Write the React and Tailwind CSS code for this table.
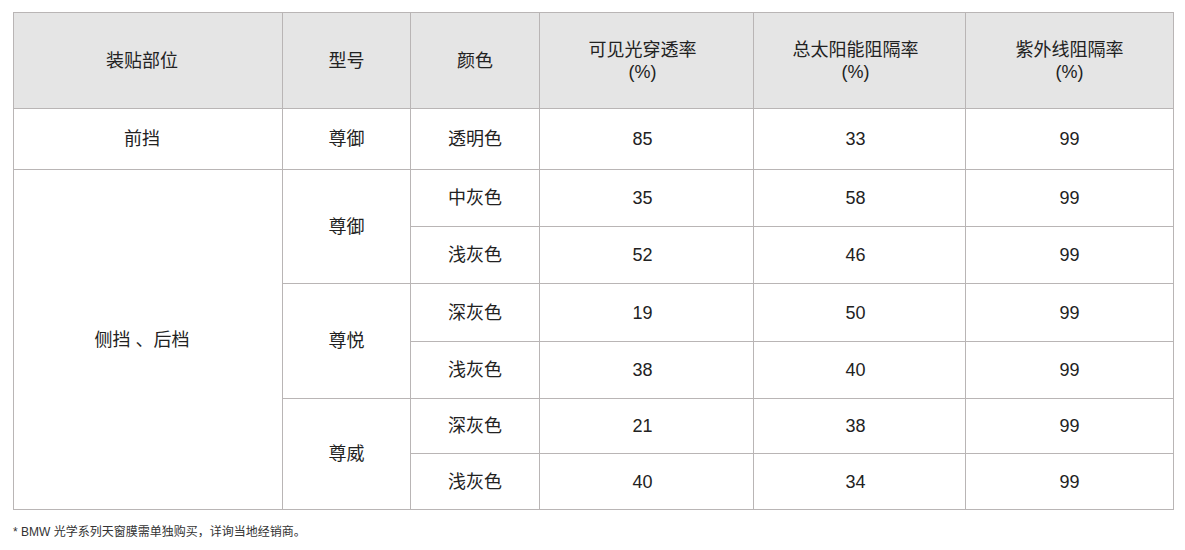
const rows = [
  { part: '前挡', partSpan: 1, model: '尊御', modelSpan: 1, color: '透明色', vis: 85, sun: 33, uv: 99, h: 'h-[61px]' },
  { part: '侧挡 、后档', partSpan: 6, model: '尊御', modelSpan: 2, color: '中灰色', vis: 35, sun: 58, uv: 99, h: 'h-[57px]' },
  { color: '浅灰色', vis: 52, sun: 46, uv: 99, h: 'h-[57px]' },
  { model: '尊悦', modelSpan: 2, color: '深灰色', vis: 19, sun: 50, uv: 99, h: 'h-[58px]' },
  { color: '浅灰色', vis: 38, sun: 40, uv: 99, h: 'h-[57px]' },
  { model: '尊威', modelSpan: 2, color: '深灰色', vis: 21, sun: 38, uv: 99, h: 'h-[55px]' },
  { color: '浅灰色', vis: 40, sun: 34, uv: 99, h: 'h-[56px]' },
];

const cell = 'border border-[#b9b5b5] text-center align-middle';

export default function App() {
  return (
    <div className="min-h-[550px] bg-white pl-[13px] pt-[12px] font-['Liberation_Sans','Noto_Sans_CJK_SC',sans-serif] text-[#222]">
      <table className="w-[1160px] table-fixed border-collapse text-[18px] leading-[22px]">
        <colgroup>
          <col className="w-[269px]" />
          <col className="w-[128px]" />
          <col className="w-[129px]" />
          <col className="w-[214px]" />
          <col className="w-[212px]" />
          <col className="w-[208px]" />
        </colgroup>
        <thead>
          <tr className="h-[96px] bg-[#e5e5e5]">
            <th className={`${cell} pr-[12px] font-normal`}>装贴部位</th>
            <th className={`${cell} font-normal`}>型号</th>
            <th className={`${cell} font-normal`}>颜色</th>
            <th className={`${cell} pr-[8px] font-normal`}>可见光穿透率<br />(%)</th>
            <th className={`${cell} pr-[8px] font-normal`}>总太阳能阻隔率<br />(%)</th>
            <th className={`${cell} font-normal`}>紫外线阻隔率<br />(%)</th>
          </tr>
        </thead>
        <tbody>
          {rows.map((r, i) => (
            <tr key={i} className={r.h}>
              {r.part && <td rowSpan={r.partSpan} className={`${cell} pr-[12px]`}>{r.part}</td>}
              {r.model && <td rowSpan={r.modelSpan} className={cell}>{r.model}</td>}
              <td className={cell}>{r.color}</td>
              <td className={`${cell} pr-[8px]`}>{r.vis}</td>
              <td className={`${cell} pr-[8px]`}>{r.sun}</td>
              <td className={cell}>{r.uv}</td>
            </tr>
          ))}
        </tbody>
      </table>
      <p className="mt-[14px] text-[12px] leading-[16px] text-[#333]">* BMW 光学系列天窗膜需单独购买，详询当地经销商。</p>
    </div>
  );
}
